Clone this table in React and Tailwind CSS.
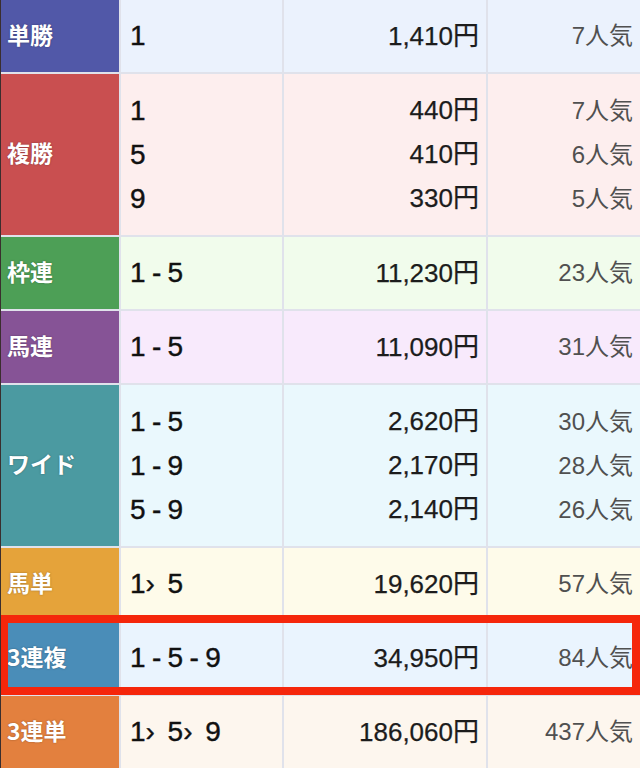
import React from "react";

const rows = [
  { label: "単勝", lc: "bg-[#5158a8]", bg: "bg-[#ebf2fd]", lines: [[["1"], "1,410円", "7人気"]] },
  {
    label: "複勝", lc: "bg-[#c94f50]", bg: "bg-[#fdeeee]",
    lines: [[["1"], "440円", "7人気"], [["5"], "410円", "6人気"], [["9"], "330円", "5人気"]],
  },
  { label: "枠連", lc: "bg-[#4d9f56]", bg: "bg-[#f1fcec]", lines: [[["1", "-", "5"], "11,230円", "23人気"]] },
  { label: "馬連", lc: "bg-[#865396]", bg: "bg-[#f8eafc]", lines: [[["1", "-", "5"], "11,090円", "31人気"]] },
  {
    label: "ワイド", lc: "bg-[#4b9aa1]", bg: "bg-[#eaf8fd]",
    lines: [
      [["1", "-", "5"], "2,620円", "30人気"],
      [["1", "-", "9"], "2,170円", "28人気"],
      [["5", "-", "9"], "2,140円", "26人気"],
    ],
  },
  { label: "馬単", lc: "bg-[#e5a33a]", bg: "bg-[#fefbea]", lines: [[["1", "›", "5"], "19,620円", "57人気"]] },
  { label: "3連複", lc: "bg-[#4a8db8]", bg: "bg-[#eaf4fe]", lines: [[["1", "-", "5", "-", "9"], "34,950円", "84人気"]], mark: true },
  { label: "3連単", lc: "bg-[#e3803e]", bg: "bg-[#fdf6ee]", lines: [[["1", "›", "5", "›", "9"], "186,060円", "437人気"]] },
];

function Combo({ parts }) {
  return (
    <span className="inline-flex items-center">
      {parts.map((p, i) =>
        p === "-" ? (
          <span key={i} className="inline-block w-[22px] text-center">-</span>
        ) : p === "›" ? (
          <span key={i} className="inline-block w-[22px] text-left">›</span>
        ) : (
          <span key={i}>{p}</span>
        )
      )}
    </span>
  );
}

function Row({ r }) {
  const h = r.lines.length > 1 ? "h-[161px]" : "h-[72px]";
  return (
    <div className={`relative grid grid-cols-[118px_161px_202px_152px] gap-x-[2px] ${h}`}>
      <div className={`${r.lc} flex items-center pl-[6px] pb-[4px] text-white font-bold text-[23px] font-['Noto_Sans_CJK_JP',sans-serif] [text-shadow:0_0_2px_rgba(0,0,0,0.35)]`}>
        {r.label}
      </div>
      <div className={`${r.bg} flex flex-col justify-center pl-[9px] text-[28px] text-[#111] [-webkit-text-stroke:0.4px_#111]`}>
        {r.lines.map((l, i) => (
          <div key={i} className="h-[44px] flex items-center">
            <Combo parts={l[0]} />
          </div>
        ))}
      </div>
      <div className={`${r.bg} flex flex-col justify-center items-end pr-[7px] text-[26px] text-[#1c1c1c] [-webkit-text-stroke:0.25px_#1c1c1c]`}>
        {r.lines.map((l, i) => (
          <div key={i} className="h-[44px] flex items-center">{l[1]}</div>
        ))}
      </div>
      <div className={`${r.bg} flex flex-col justify-center items-end pr-[7px] text-[24px] text-[#505050]`}>
        {r.lines.map((l, i) => (
          <div key={i} className="h-[44px] flex items-center">{l[2]}</div>
        ))}
      </div>
      {r.mark && (
        <div className="absolute left-[-1px] right-0 top-[-7px] bottom-[-1px] border-[8px] border-[#f5260b] pointer-events-none z-10" />
      )}
    </div>
  );
}

export default function App() {
  return (
    <div className="w-[640px] h-[768px] overflow-hidden bg-white border-l border-[#3a2e2e] font-['Liberation_Sans','Noto_Sans_CJK_JP',sans-serif]">
      <div className="flex flex-col gap-y-[2px] bg-[#e0e2eb]">
        {rows.map((r, i) => (
          <Row key={i} r={r} />
        ))}
      </div>
    </div>
  );
}
